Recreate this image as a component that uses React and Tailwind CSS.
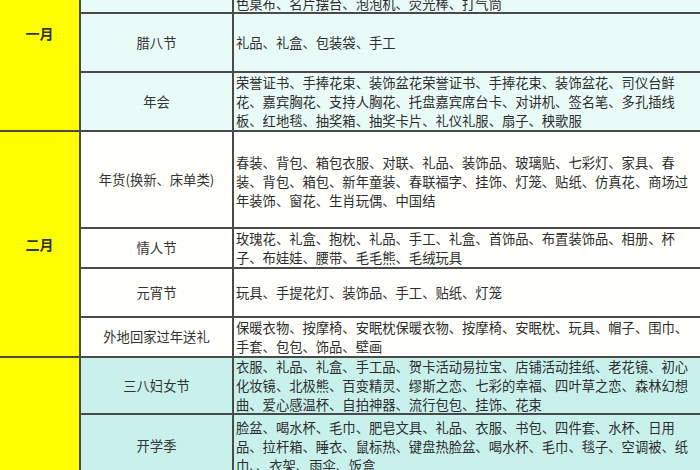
const FONT = { fontFamily: '"Noto Sans CJK SC", "Noto Sans", sans-serif' }

// 每月一组，行高按截图量出（含 2px 底边框）
const GROUPS = [
  {
    month: '一月',
    bg: 'bg-[#e9fbf7]',
    rows: [
      {
        label: '元旦',
        h: 'h-[77px]',
        lines: [
          '签到台、签到本、签字笔、胸花、嘉宾证、工作证、指示牌、桌卡、气球、',
          '拱门、舞台背景、横幅、彩带、礼花筒、桌布、椅套、纱幔、灯串、桌旗、',
          '蜡烛、香薰、餐巾、餐具、水杯、茶歇点心、糖果盒、喜糖、音响、话筒、',
          '色桌布、名片摆台、泡泡机、荧光棒、打气筒',
        ],
      },
      { label: '腊八节', h: 'h-[59px]', lines: ['礼品、礼盒、包装袋、手工'] },
      {
        label: '年会',
        h: 'h-[59px]',
        lines: [
          '荣誉证书、手捧花束、装饰盆花荣誉证书、手捧花束、装饰盆花、司仪台鲜',
          '花、嘉宾胸花、支持人胸花、托盘嘉宾席台卡、对讲机、签名笔、多孔插线',
          '板、红地毯、抽奖箱、抽奖卡片、礼仪礼服、扇子、秧歌服',
        ],
      },
    ],
  },
  {
    month: '二月',
    bg: 'bg-[#fffffc]',
    rows: [
      {
        label: '年货(换新、床单类)',
        h: 'h-[97px]',
        pad: 'pt-[4px]',
        lines: [
          '春装、背包、箱包衣服、对联、礼品、装饰品、玻璃贴、七彩灯、家具、春',
          '装、背包、箱包、新年童装、春联福字、挂饰、灯笼、贴纸、仿真花、商场过',
          '年装饰、窗花、生肖玩偶、中国结',
        ],
      },
      {
        label: '情人节',
        h: 'h-[40px]',
        lines: [
          '玫瑰花、礼盒、抱枕、礼品、手工、礼盒、首饰品、布置装饰品、相册、杯',
          '子、布娃娃、腰带、毛毛熊、毛绒玩具',
        ],
      },
      { label: '元宵节', h: 'h-[49px]', lines: ['玩具、手提花灯、装饰品、手工、贴纸、灯笼'] },
      {
        label: '外地回家过年送礼',
        h: 'h-[40px]',
        lines: [
          '保暖衣物、按摩椅、安眠枕保暖衣物、按摩椅、安眠枕、玩具、帽子、围巾、',
          '手套、包包、饰品、壁画',
        ],
      },
    ],
  },
  {
    month: '三月',
    bg: 'bg-[#c9f1ec]',
    rows: [
      {
        label: '三八妇女节',
        h: 'h-[57px]',
        lines: [
          '衣服、礼品、礼盒、手工品、贺卡活动易拉宝、店铺活动挂纸、老花镜、初心',
          '化妆镜、北极熊、百变精灵、缪斯之恋、七彩的幸福、四叶草之恋、森林幻想',
          '曲、爱心感温杯、自拍神器、流行包包、挂饰、花束',
        ],
      },
      {
        label: '开学季',
        h: 'h-[64px]',
        lines: [
          '脸盆、喝水杯、毛巾、肥皂文具、礼品、衣服、书包、四件套、水杯、日用',
          '品、拉杆箱、睡衣、鼠标热、键盘热脸盆、喝水杯、毛巾、毯子、空调被、纸',
          '巾、、衣架、雨伞、饭盒',
        ],
      },
      {
        label: '植树节',
        h: 'h-[70px]',
        lines: ['树苗、铁锹、水壶、手套、标牌、环保袋'],
      },
      {
        label: '消费者权益日',
        h: 'h-[70px]',
        lines: ['宣传单页、展架、横幅、小礼品、购物袋'],
      },
    ],
  },
]

function Row({ row, bg }) {
  return (
    <div className={`flex ${row.h} border-b-2 border-[#4a4a4a] ${bg}`}>
      <div className="w-[153px] shrink-0 border-r-2 border-[#4a4a4a] flex items-center justify-center text-[13.3px] text-[#333]">
        {row.label}
      </div>
      <div className={`flex-1 flex flex-col justify-center pl-[2px] overflow-hidden ${row.pad ?? ''}`}>
        {row.lines.map((l, i) => (
          <div key={i} className="whitespace-nowrap text-[13.3px] leading-[19px] text-[#2d2d2d]">{l}</div>
        ))}
      </div>
    </div>
  )
}

export default function App() {
  return (
    <div className="w-[700px] h-[470px] overflow-hidden bg-white" style={FONT}>
      <div className="-mt-[63px]">
        {GROUPS.map(g => (
          <div key={g.month} className="flex">
            <div className="w-[81px] shrink-0 bg-[#ffff00] border-r-2 border-b-2 border-[#4a4a4a] flex items-center justify-center text-[14px] font-bold text-[#333]">
              {g.month}
            </div>
            <div className="flex-1 flex flex-col">
              {g.rows.map(r => <Row key={r.label} row={r} bg={g.bg} />)}
            </div>
          </div>
        ))}
      </div>
    </div>
  )
}
